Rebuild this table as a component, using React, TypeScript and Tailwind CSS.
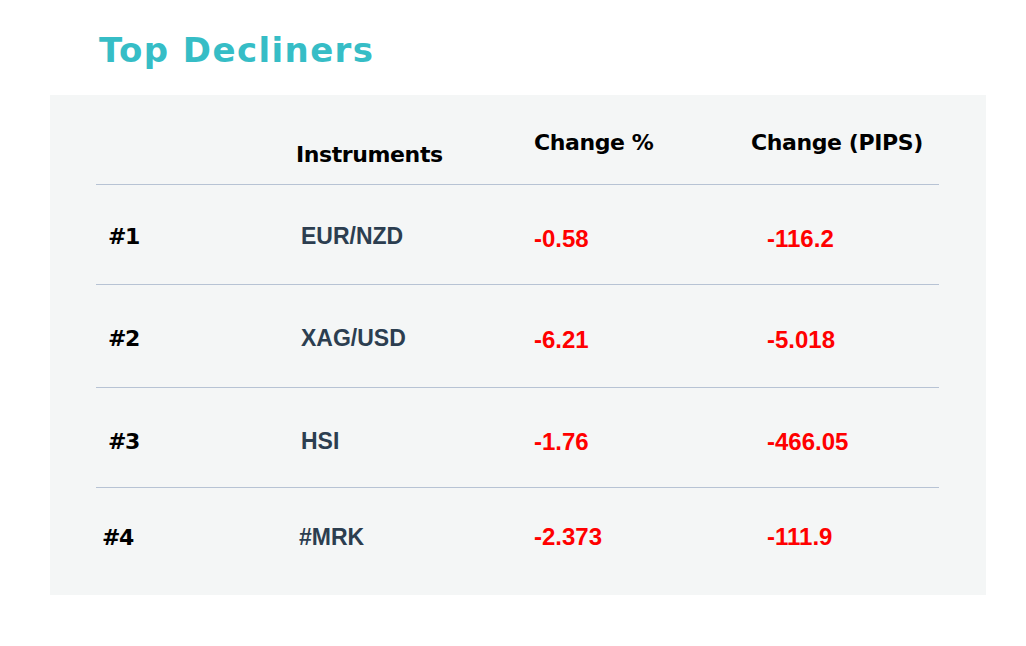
const ROWS = [
  { rank: "#1", symbol: "EUR/NZD", pct: "-0.58", pips: "-116.2", h: "h-[100px]", symMt: "mt-[3px]", numMt: "mt-[8px]" },
  { rank: "#2", symbol: "XAG/USD", pct: "-6.21", pips: "-5.018", h: "h-[103px]", symMt: "mt-[5px]", numMt: "mt-[7px]" },
  { rank: "#3", symbol: "HSI", pct: "-1.76", pips: "-466.05", h: "h-[100px]", symMt: "mt-[8px]", numMt: "mt-[8px]" },
  { rank: "#4", symbol: "#MRK", pct: "-2.373", pips: "-111.9", h: "h-[107px]", symMt: "-mt-[9px]", numMt: "-mt-[10px]" },
];

export default function App() {
  return (
    <div className="w-[1026px] h-[646px] bg-white">
      <h1 className="pl-[99px] pt-[26px] h-[95px] text-[34px] font-bold tracking-[1.4px] text-[#36bdc6] font-['DejaVu_Sans',sans-serif] leading-[48px]">
        Top Decliners
      </h1>
      <div className="ml-[50px] w-[936px] bg-[#f4f6f6] pl-[46px]">
        <div className="w-[843px]">
          {/* Header */}
          <div className="grid grid-cols-[200px_238px_217px_1fr] h-[90px] border-b border-[#b7c3d4] font-['DejaVu_Sans',sans-serif] font-bold text-[22px] tracking-[-0.4px] text-black leading-[28px]">
            <div />
            <div className="pt-[46px]">Instruments</div>
            <div className="pt-[34px]">Change %</div>
            <div className="pt-[34px]">Change (PIPS)</div>
          </div>

          {ROWS.map((r, i) => (
            <div
              key={r.rank}
              className={`grid grid-cols-[200px_238px_233px_1fr] items-center ${r.h} ${
                i < ROWS.length - 1 ? "border-b border-[#b7c3d4]" : ""
              } font-['Liberation_Sans',Arial,sans-serif] font-bold text-[23px]`}
            >
              <div
                className={`${i === 3 ? "pl-[6px]" : "pl-[12px]"} text-black font-['DejaVu_Sans',sans-serif] text-[22px] tracking-[-1.5px] ${r.symMt}`}
              >
                {r.rank}
              </div>
              <div className={`${i === 3 ? "pl-[3px]" : "pl-[5px]"} text-[#2c3e50] ${r.symMt}`}>
                {r.symbol}
              </div>
              <div className={`text-[#ff0000] text-[24px] ${r.numMt}`}>{r.pct}</div>
              <div className={`text-[#ff0000] text-[24px] ${r.numMt}`}>{r.pips}</div>
            </div>
          ))}
        </div>
      </div>
    </div>
  );
}
